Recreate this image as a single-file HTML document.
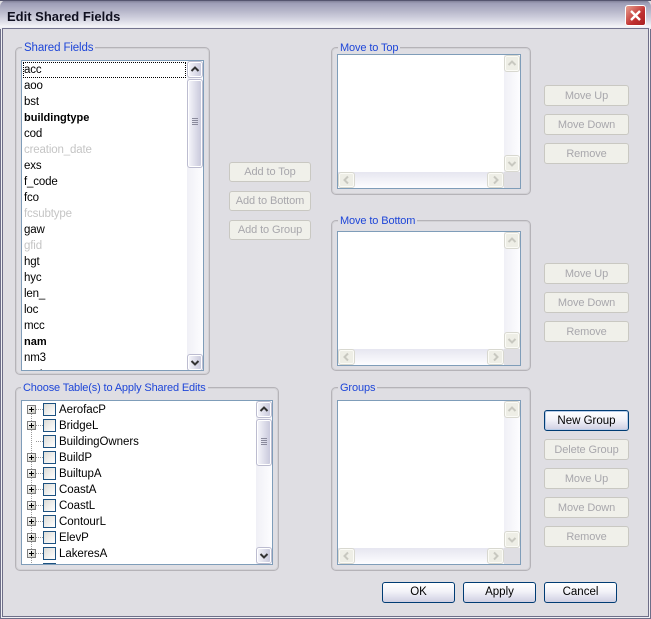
<!DOCTYPE html>
<html><head><meta charset="utf-8">
<style>
html,body{margin:0;padding:0;background:#dfdee3}
#w{position:relative;width:651px;height:619px;overflow:hidden;background:#dfdee3;font:11px "Liberation Sans",sans-serif;color:#000}
#w div,#w svg,#w span{position:absolute;box-sizing:border-box}
.g{border:1px solid #b5b3b8;border-radius:5px;box-shadow:inset 0 0 0 1px #d2d1d5}
.gl{background:#dfdee3;color:#1e46d8;padding:0 2px;white-space:nowrap;line-height:14px;height:14px;font-size:11.500px;letter-spacing:-.12px}
.l{background:#fff;border:1px solid #7f9db9;overflow:hidden}
.b{text-align:center;border-radius:3px;border:1px solid #c9c8c2;background:#f0f0ea;color:#a8a7ac;line-height:21px;white-space:nowrap;font-size:11px;letter-spacing:-.1px}
.add{line-height:19px}
.a{border:1px solid #003c74;background:linear-gradient(#fff 0,#f2f2f8 45%,#cfcfe2 100%);color:#000;border-radius:3px;text-align:center;line-height:19px;font-size:11.500px}
.r{left:2px;height:16px;line-height:18px;white-space:nowrap;font-size:11.500px;letter-spacing:-.15px}
.d{color:#c5c5c5}
.s{font-weight:bold;font-size:11px;letter-spacing:0}
.sb{border:1px solid #fff;outline:1px solid #bcbcd0;border-radius:2px;background:linear-gradient(90deg,#f3f3f9,#c9c9dc)}
.track{background:linear-gradient(90deg,#f0f0f6,#fdfdff)}
.htrack{background:linear-gradient(#e6e6f0,#fdfdff)}
.ds{background:#eeeee6;border:1px solid #fbfbf6;outline:1px solid #d8d8d0;border-radius:2px}
.cb{width:13px;height:13px;border:1px solid #1c5180;background:linear-gradient(135deg,#dcdcd7,#fff)}
.t{left:37px;height:16px;line-height:18px;white-space:nowrap;font-size:11.500px;letter-spacing:-.05px}
.px{width:9px;height:9px;border:1px solid #7f7f7f;background:linear-gradient(135deg,#fff,#c8c8c0);left:5px}
.dh{height:1px;border-top:1px dotted #9a9a9a;left:14px;width:7px}
.dv{width:1px;border-left:1px dotted #9a9a9a;left:9px}
</style></head><body><div id="w">

<!-- title bar -->
<div style="left:0;top:0;width:651px;height:29px;background:linear-gradient(#77778f 0,#9f9fb8 12%,#b4b4c8 35%,#d8d8e4 70%,#f4f4f8 92%,#e6e6ee 100%);border-radius:7px 7px 0 0"></div>
<div style="left:7px;top:8px;font:bold 13px/18px 'Liberation Sans',sans-serif;color:#101020;white-space:nowrap">Edit Shared Fields</div>
<div style="left:625px;top:5px;width:21px;height:21px;border:1px solid #fff;border-radius:3px;background:linear-gradient(135deg,#e8a090,#c03030 60%,#a82020)"></div>
<svg style="left:625px;top:5px" width="21" height="21"><path d="M6 6L15 15M15 6L6 15" stroke="#fff" stroke-width="2.400" fill="none"/></svg>
<!-- frame -->
<div style="left:0;top:29px;width:1px;height:590px;background:#6e6e88"></div>
<div style="left:1px;top:29px;width:1px;height:589px;background:#f0f0f4"></div>
<div style="left:2px;top:28px;width:1px;height:589px;background:#6e6e88"></div>
<div style="left:650px;top:29px;width:1px;height:590px;background:#6e6e88"></div>
<div style="left:649px;top:29px;width:1px;height:589px;background:#f0f0f4"></div>
<div style="left:648px;top:28px;width:1px;height:589px;background:#6e6e88"></div>
<div style="left:0;top:618px;width:651px;height:1px;background:#6e6e88"></div>
<div style="left:1px;top:617px;width:649px;height:1px;background:#f0f0f4"></div>
<div style="left:2px;top:616px;width:647px;height:1px;background:#6e6e88"></div>
<div style="left:2px;top:28px;width:647px;height:1px;background:#73738e"></div>
<div style="left:0;top:0;width:651px;height:1px;background:#55556f"></div>

<!-- Shared Fields -->
<div class="g" style="left:15px;top:47px;width:195px;height:328px"></div>
<div class="gl" style="left:22px;top:41px">Shared Fields</div>
<div class="l" style="left:21px;top:60px;width:183px;height:311px">
 <div style="left:1px;top:1px;width:163px;height:16px;border:1px dotted #000"></div>
 <div class="r" style="top:0">acc</div>
 <div class="r" style="top:16px">aoo</div>
 <div class="r" style="top:32px">bst</div>
 <div class="r s" style="top:48px">buildingtype</div>
 <div class="r" style="top:64px">cod</div>
 <div class="r d" style="top:80px">creation_date</div>
 <div class="r" style="top:96px">exs</div>
 <div class="r" style="top:112px">f_code</div>
 <div class="r" style="top:128px">fco</div>
 <div class="r d" style="top:144px">fcsubtype</div>
 <div class="r" style="top:160px">gaw</div>
 <div class="r d" style="top:176px">gfid</div>
 <div class="r" style="top:192px">hgt</div>
 <div class="r" style="top:208px">hyc</div>
 <div class="r" style="top:224px">len_</div>
 <div class="r" style="top:240px">loc</div>
 <div class="r" style="top:256px">mcc</div>
 <div class="r s" style="top:272px">nam</div>
 <div class="r" style="top:288px">nm3</div>
 <div class="r" style="top:304px">nmt</div>
 <div class="track" style="left:165px;top:0;width:16px;height:309px"></div>
 <div class="sb" style="left:166px;top:1px;width:14px;height:15px"></div>
 <svg style="left:166px;top:1px" width="14" height="15"><path d="M3.500 9L7 5.500L10.500 9" stroke="#333" stroke-width="2" fill="none"/></svg>
 <div class="sb" style="left:166px;top:19px;width:14px;height:87px"></div>
 <svg style="left:166px;top:57px" width="14" height="8"><path d="M4 .5H10M4 2.500H10M4 4.500H10M4 6.500H10" stroke="#8a8a9c" fill="none"/></svg>
 <div class="sb" style="left:166px;top:294px;width:14px;height:15px"></div>
 <svg style="left:166px;top:294px" width="14" height="15"><path d="M3.500 6L7 9.500L10.500 6" stroke="#333" stroke-width="2" fill="none"/></svg>
</div>

<!-- Choose tables -->
<div class="g" style="left:15px;top:387px;width:264px;height:184px"></div>
<div class="gl" style="left:21px;top:381px;font-size:11px;letter-spacing:-.15px">Choose Table(s) to Apply Shared Edits</div>
<div class="l" style="left:21px;top:400px;width:252px;height:165px">
 <div class="dv" style="top:4px;height:160px"></div>
 <div class="px" style="top:4px"></div><div class="px" style="top:20px"></div>
 <div class="px" style="top:52px"></div><div class="px" style="top:68px"></div>
 <div class="px" style="top:84px"></div><div class="px" style="top:100px"></div>
 <div class="px" style="top:116px"></div><div class="px" style="top:132px"></div><div class="px" style="top:148px"></div>
 <svg style="left:5px;top:4px" width="9" height="160"><path d="M2 4.500H7M4.500 2V7M2 20.500H7M4.500 18V23M2 52.500H7M4.500 50V55M2 68.500H7M4.500 66V71M2 84.500H7M4.500 82V87M2 100.500H7M4.500 98V103M2 116.500H7M4.500 114V119M2 132.500H7M4.500 130V135M2 148.500H7M4.500 146V151" stroke="#000" fill="none"/></svg>
 <div class="dh" style="top:8px"></div><div class="dh" style="top:24px"></div><div class="dh" style="top:40px"></div><div class="dh" style="top:56px"></div><div class="dh" style="top:72px"></div><div class="dh" style="top:88px"></div><div class="dh" style="top:104px"></div><div class="dh" style="top:120px"></div><div class="dh" style="top:136px"></div><div class="dh" style="top:152px"></div>
 <div class="cb" style="left:21px;top:2px"></div><div class="cb" style="left:21px;top:18px"></div><div class="cb" style="left:21px;top:34px"></div><div class="cb" style="left:21px;top:50px"></div><div class="cb" style="left:21px;top:66px"></div><div class="cb" style="left:21px;top:82px"></div><div class="cb" style="left:21px;top:98px"></div><div class="cb" style="left:21px;top:114px"></div><div class="cb" style="left:21px;top:130px"></div><div class="cb" style="left:21px;top:146px"></div><div class="cb" style="left:21px;top:162px"></div>
 <div class="t" style="top:0">AerofacP</div>
 <div class="t" style="top:16px">BridgeL</div>
 <div class="t" style="top:32px">BuildingOwners</div>
 <div class="t" style="top:48px">BuildP</div>
 <div class="t" style="top:64px">BuiltupA</div>
 <div class="t" style="top:80px">CoastA</div>
 <div class="t" style="top:96px">CoastL</div>
 <div class="t" style="top:112px">ContourL</div>
 <div class="t" style="top:128px">ElevP</div>
 <div class="t" style="top:144px">LakeresA</div>
 <div class="track" style="left:234px;top:0;width:16px;height:163px"></div>
 <div class="sb" style="left:235px;top:1px;width:14px;height:15px"></div>
 <svg style="left:235px;top:1px" width="14" height="15"><path d="M3.500 9L7 5.500L10.500 9" stroke="#333" stroke-width="2" fill="none"/></svg>
 <div class="sb" style="left:235px;top:19px;width:14px;height:45px"></div>
 <svg style="left:235px;top:37px" width="14" height="8"><path d="M4 .5H10M4 2.500H10M4 4.500H10M4 6.500H10" stroke="#8a8a9c" fill="none"/></svg>
 <div class="sb" style="left:235px;top:147px;width:14px;height:15px"></div>
 <svg style="left:235px;top:147px" width="14" height="15"><path d="M3.500 6L7 9.500L10.500 6" stroke="#333" stroke-width="2" fill="none"/></svg>
</div>

<!-- Add buttons -->
<div class="b add" style="left:229px;top:162px;width:82px;height:20px">Add to Top</div>
<div class="b add" style="left:229px;top:191px;width:82px;height:20px">Add to Bottom</div>
<div class="b add" style="left:229px;top:220px;width:82px;height:20px">Add to Group</div>

<!-- Move to Top -->
<div class="g" style="left:331px;top:47px;width:200px;height:148px"></div>
<div class="gl" style="left:338px;top:41px;font-size:11px">Move to Top</div>
<div class="l" style="left:337px;top:54px;width:184px;height:135px">
 <div class="track" style="left:166px;top:0;width:16px;height:117px"></div>
 <div class="htrack" style="left:0;top:117px;width:166px;height:16px"></div>
 <div style="left:166px;top:117px;width:16px;height:16px;background:#dfdee3"></div>
 <div class="ds" style="left:167px;top:1px;width:14px;height:15px"></div>
 <svg style="left:167px;top:1px" width="14" height="15"><path d="M3.500 9L7 5.500L10.500 9" stroke="#c8c8c0" stroke-width="2" fill="none"/></svg>
 <div class="ds" style="left:167px;top:101px;width:14px;height:15px"></div>
 <svg style="left:167px;top:101px" width="14" height="15"><path d="M3.500 6L7 9.500L10.500 6" stroke="#c8c8c0" stroke-width="2" fill="none"/></svg>
 <div class="ds" style="left:1px;top:118px;width:15px;height:14px"></div>
 <svg style="left:1px;top:118px" width="15" height="14"><path d="M9 3.500L5.500 7L9 10.500" stroke="#c8c8c0" stroke-width="2" fill="none"/></svg>
 <div class="ds" style="left:150px;top:118px;width:15px;height:14px"></div>
 <svg style="left:150px;top:118px" width="15" height="14"><path d="M6 3.500L9.500 7L6 10.500" stroke="#c8c8c0" stroke-width="2" fill="none"/></svg>
</div>
<div class="b" style="left:544px;top:85px;width:85px;height:21px">Move Up</div>
<div class="b" style="left:544px;top:114px;width:85px;height:21px">Move Down</div>
<div class="b" style="left:544px;top:143px;width:85px;height:21px">Remove</div>

<!-- Move to Bottom -->
<div class="g" style="left:331px;top:220px;width:200px;height:151px"></div>
<div class="gl" style="left:338px;top:214px;font-size:11px">Move to Bottom</div>
<div class="l" style="left:337px;top:231px;width:184px;height:135px">
 <div class="track" style="left:166px;top:0;width:16px;height:117px"></div>
 <div class="htrack" style="left:0;top:117px;width:166px;height:16px"></div>
 <div style="left:166px;top:117px;width:16px;height:16px;background:#dfdee3"></div>
 <div class="ds" style="left:167px;top:1px;width:14px;height:15px"></div>
 <svg style="left:167px;top:1px" width="14" height="15"><path d="M3.500 9L7 5.500L10.500 9" stroke="#c8c8c0" stroke-width="2" fill="none"/></svg>
 <div class="ds" style="left:167px;top:101px;width:14px;height:15px"></div>
 <svg style="left:167px;top:101px" width="14" height="15"><path d="M3.500 6L7 9.500L10.500 6" stroke="#c8c8c0" stroke-width="2" fill="none"/></svg>
 <div class="ds" style="left:1px;top:118px;width:15px;height:14px"></div>
 <svg style="left:1px;top:118px" width="15" height="14"><path d="M9 3.500L5.500 7L9 10.500" stroke="#c8c8c0" stroke-width="2" fill="none"/></svg>
 <div class="ds" style="left:150px;top:118px;width:15px;height:14px"></div>
 <svg style="left:150px;top:118px" width="15" height="14"><path d="M6 3.500L9.500 7L6 10.500" stroke="#c8c8c0" stroke-width="2" fill="none"/></svg>
</div>
<div class="b" style="left:544px;top:263px;width:85px;height:21px">Move Up</div>
<div class="b" style="left:544px;top:292px;width:85px;height:21px">Move Down</div>
<div class="b" style="left:544px;top:321px;width:85px;height:21px">Remove</div>

<!-- Groups -->
<div class="g" style="left:331px;top:387px;width:200px;height:184px"></div>
<div class="gl" style="left:338px;top:381px;font-size:11px">Groups</div>
<div class="l" style="left:337px;top:400px;width:184px;height:165px">
 <div class="track" style="left:166px;top:0;width:16px;height:147px"></div>
 <div class="htrack" style="left:0;top:147px;width:166px;height:16px"></div>
 <div style="left:166px;top:147px;width:16px;height:16px;background:#dfdee3"></div>
 <div class="ds" style="left:167px;top:1px;width:14px;height:15px"></div>
 <svg style="left:167px;top:1px" width="14" height="15"><path d="M3.500 9L7 5.500L10.500 9" stroke="#c8c8c0" stroke-width="2" fill="none"/></svg>
 <div class="ds" style="left:167px;top:131px;width:14px;height:15px"></div>
 <svg style="left:167px;top:131px" width="14" height="15"><path d="M3.500 6L7 9.500L10.500 6" stroke="#c8c8c0" stroke-width="2" fill="none"/></svg>
 <div class="ds" style="left:1px;top:148px;width:15px;height:14px"></div>
 <svg style="left:1px;top:148px" width="15" height="14"><path d="M9 3.500L5.500 7L9 10.500" stroke="#c8c8c0" stroke-width="2" fill="none"/></svg>
 <div class="ds" style="left:150px;top:148px;width:15px;height:14px"></div>
 <svg style="left:150px;top:148px" width="15" height="14"><path d="M6 3.500L9.500 7L6 10.500" stroke="#c8c8c0" stroke-width="2" fill="none"/></svg>
</div>
<div class="a" style="left:544px;top:410px;width:85px;height:21px;line-height:21px;box-shadow:inset 0 0 0 1px #b8cce8">New Group</div>
<div class="b" style="left:544px;top:439px;width:85px;height:21px">Delete Group</div>
<div class="b" style="left:544px;top:468px;width:85px;height:21px">Move Up</div>
<div class="b" style="left:544px;top:497px;width:85px;height:21px">Move Down</div>
<div class="b" style="left:544px;top:526px;width:85px;height:21px">Remove</div>

<!-- Dialog buttons -->
<div class="a" style="left:382px;top:582px;width:73px;height:21px">OK</div>
<div class="a" style="left:463px;top:582px;width:73px;height:21px">Apply</div>
<div class="a" style="left:544px;top:582px;width:73px;height:21px">Cancel</div>
</div></body></html>
